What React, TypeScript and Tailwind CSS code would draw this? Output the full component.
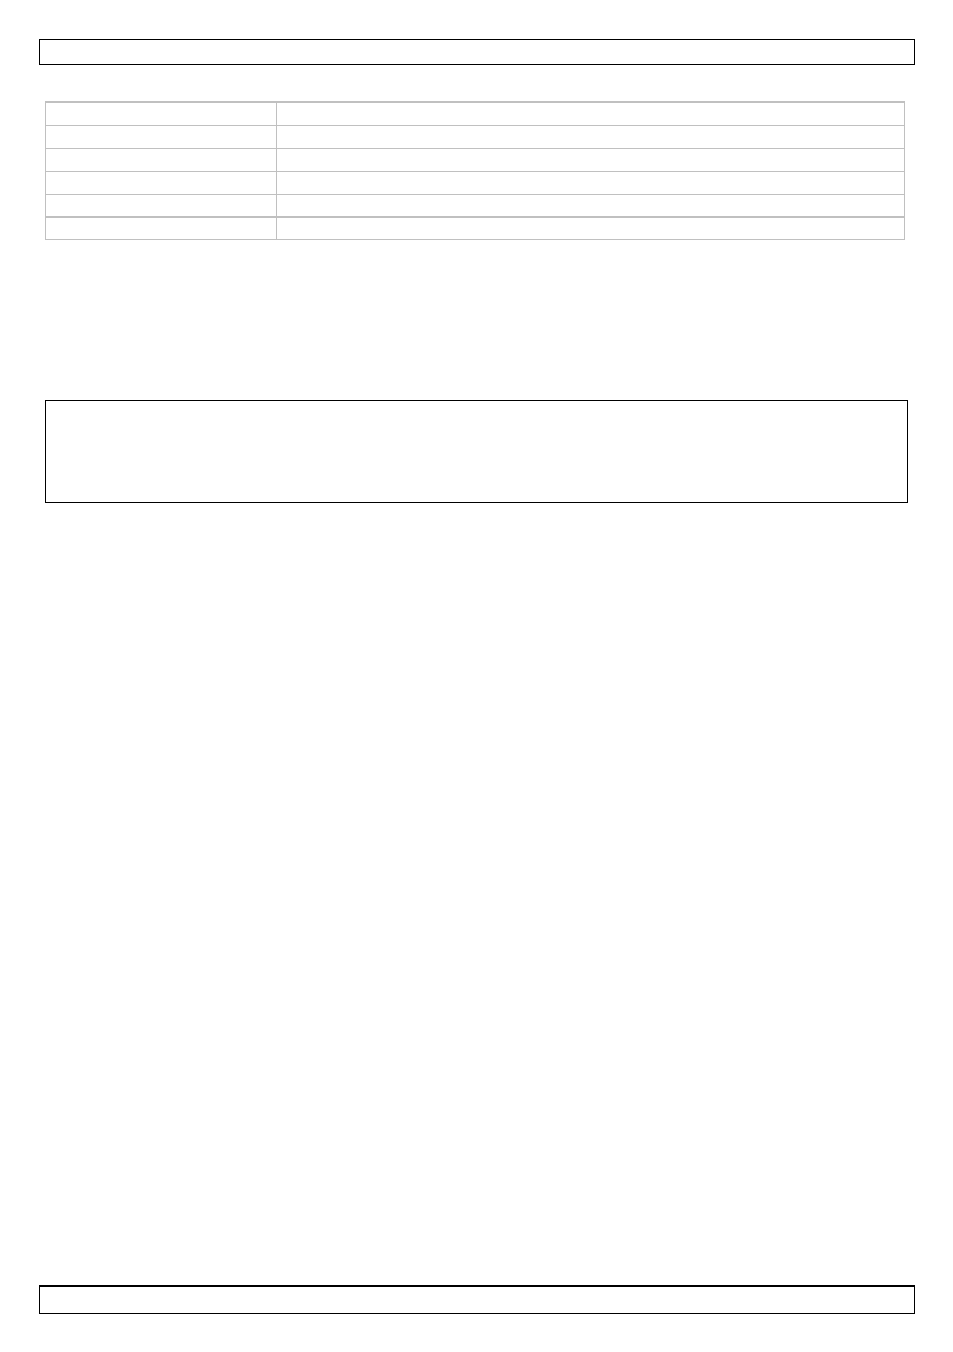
export default function App() {
  const rows = [0, 1, 2, 3, 4, 5];
  return (
    <div className="w-[953px] h-[1352px] bg-white flex flex-col" style={{ fontFamily: '"Liberation Sans", Arial, sans-serif' }}>
      <div className="ml-[39px] mt-[39px] w-[876px] h-[26px] border border-black" />
      <div className="ml-[45px] mt-[36px] w-[860px] border-x border-b border-t-2 border-[#c0c0c0]">
        {rows.map((r) => (
          <div
            key={r}
            className={
              r === 4
                ? "flex h-[23px] border-b-2 border-[#c0c0c0]"
                : r === 5
                ? "flex h-[21px]"
                : "flex h-[23px] border-b border-[#c0c0c0]"
            }
          >
            <div className="w-[231px] border-r border-[#c0c0c0]" />
            <div className="flex-1" />
          </div>
        ))}
      </div>
      <div className="ml-[45px] mt-[160px] w-[863px] h-[103px] border border-black" />
      <div className="ml-[39px] mt-[782px] w-[876px] h-[29px] border border-t-2 border-black" />
    </div>
  );
}
